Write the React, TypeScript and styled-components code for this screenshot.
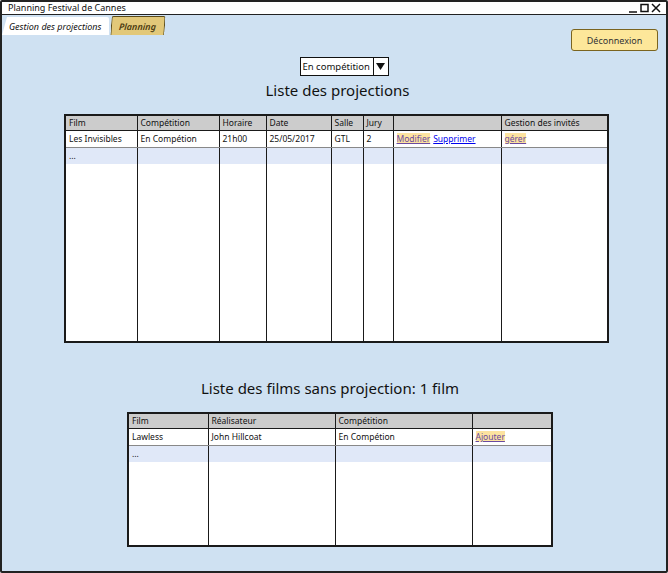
import React from "react";
import styled, { createGlobalStyle } from "styled-components";

const Global = createGlobalStyle`
  html, body { margin: 0; padding: 0; background: #ffffff; }
  body { font-family: "Noto Sans", "Open Sans", sans-serif; }
  #root { width: 668px; height: 573px; }
`;

const Window = styled.div`
  box-sizing: border-box;
  width: 668px;
  height: 573px;
  border: 2px solid #222;
  border-radius: 2px;
  background: #cfe1f2;
  display: flex;
  flex-direction: column;
  overflow: hidden;
  position: relative;
`;

const TitleBar = styled.div`
  height: 12px;
  background: #fff;
  border-bottom: 1px solid #222;
  display: flex;
  align-items: center;
  justify-content: space-between;
  padding: 0 4px 0 6px;
  font-size: 9px;
  color: #111;
  line-height: 12px;
`;

const Controls = styled.div`
  display: flex;
  align-items: center;
  gap: 2px;
`;

const TabRow = styled.div`
  height: 20px;
  display: flex;
  align-items: flex-end;
  gap: 2px;
`;

const Tab = styled.div<{ $active?: boolean }>`
  height: 18px;
  display: flex;
  align-items: center;
  padding: 0 8px 0 7px;
  font-size: 9px;
  font-style: italic;
  color: ${(p) => (p.$active ? "#111" : "#4a3a10")};
  background: ${(p) => (p.$active ? "#fff" : "#e2c879")};
  border: ${(p) => (p.$active ? "none" : "1.5px solid #5a4a1a")};
  border-bottom: none;
  clip-path: ${(p) => (p.$active ? "polygon(5px 0, 100% 0, 100% 100%, 0 100%)" : "none")};
  border-radius: 2px 2px 0 0;
  transform: ${(p) => (p.$active ? "none" : "skewX(-4deg)")};
  font-weight: ${(p) => (p.$active ? 400 : 600)};
`;

const Content = styled.div`
  flex: 1;
  display: flex;
  flex-direction: column;
  align-items: center;
  padding-top: 22px;
`;

const LogoutButton = styled.div`
  position: absolute;
  top: 27px;
  right: 8px;
  box-sizing: border-box;
  width: 87px;
  height: 22px;
  background: #fde79a;
  border: 1.5px solid #7a6420;
  border-radius: 3px;
  font-size: 9px;
  color: #333;
  display: flex;
  align-items: center;
  justify-content: center;
`;

const Select = styled.div`
  display: flex;
  height: 19px;
  width: 89px;
  box-sizing: border-box;
  border: 1px solid #111;
  background: #fff;
  margin-left: 20px;
`;

const SelectText = styled.div`
  flex: 1;
  font-size: 9.5px;
  padding-left: 2px;
  line-height: 17px;
  color: #111;
  border-right: 1px solid #111;
  white-space: nowrap;
  overflow: hidden;
`;

const SelectArrow = styled.div`
  width: 14px;
  display: flex;
  align-items: center;
  justify-content: center;
`;

const Heading = styled.div<{ $mt: number; $ml: number }>`
  margin-top: ${(p) => p.$mt}px;
  margin-left: ${(p) => p.$ml}px;
  font-size: 15px;
  color: #111;
  line-height: 20px;
`;

const Table = styled.table<{ $w: number; $h: number; $mt: number; $ml: number }>`
  margin-top: ${(p) => p.$mt}px;
  margin-left: ${(p) => p.$ml}px;
  width: ${(p) => p.$w}px;
  height: ${(p) => p.$h}px;
  border-collapse: collapse;
  table-layout: fixed;
  border: 2px solid #1a1a1a;
  background: #fff;
  font-size: 8.5px;
  color: #111;
`;

const Th = styled.th`
  background: #cccccc;
  font-weight: 400;
  text-align: left;
  height: 14px;
  padding: 0 3px;
  border-left: 1.5px solid #1a1a1a;
  border-bottom: 1.5px solid #1a1a1a;
  line-height: 14px;
  white-space: nowrap;
  overflow: hidden;
`;

const Td = styled.td<{ $alt?: boolean }>`
  height: 16px;
  padding: 0 3px;
  border-left: 1.5px solid #1a1a1a;
  background: ${(p) => (p.$alt ? "#e0e8f8" : "#fff")};
  border-bottom: ${(p) => (p.$alt ? "none" : "1px solid #888")};
  line-height: 16px;
  white-space: nowrap;
  overflow: hidden;
  vertical-align: middle;
  color: #111;
`;

const FillTd = styled.td`
  border-left: 1.5px solid #1a1a1a;
  background: #fff;
`;

const Link = styled.span<{ $hl?: boolean }>`
  color: ${(p) => (p.$hl ? "#6a4aa0" : "#0000ee")};
  background: ${(p) => (p.$hl ? "#fde3a0" : "transparent")};
  text-decoration: underline;
  margin-right: 3px;
`;

type Cell = React.ReactNode;

function Grid({
  widths,
  headers,
  row,
  w,
  h,
  mt,
  ml,
}: {
  widths: number[];
  headers: string[];
  row: Cell[];
  w: number;
  h: number;
  mt: number;
  ml: number;
}) {
  return (
    <Table $w={w} $h={h} $mt={mt} $ml={ml}>
      <colgroup>
        {widths.map((cw, i) => (
          <col key={i} style={{ width: cw }} />
        ))}
      </colgroup>
      <thead>
        <tr>
          {headers.map((t, i) => (
            <Th key={i}>{t}</Th>
          ))}
        </tr>
      </thead>
      <tbody>
        <tr>
          {row.map((c, i) => (
            <Td key={i}>{c}</Td>
          ))}
        </tr>
        <tr>
          {row.map((_, i) => (
            <Td key={i} $alt>
              {i === 0 ? "..." : ""}
            </Td>
          ))}
        </tr>
        <tr>
          {row.map((_, i) => (
            <FillTd key={i} />
          ))}
        </tr>
      </tbody>
    </Table>
  );
}

export default function App() {
  return (
    <>
      <Global />
      <Window>
        <TitleBar>
          <span>Planning Festival de Cannes</span>
          <Controls>
            <svg width="34" height="10" viewBox="0 0 34 10">
              <line x1="1" y1="9" x2="9" y2="9" stroke="#111" strokeWidth="1.5" />
              <rect x="13" y="1.5" width="7" height="7" fill="none" stroke="#111" strokeWidth="1.5" />
              <path d="M24 1 L32 9 M32 1 L24 9" stroke="#111" strokeWidth="1.5" />
            </svg>
          </Controls>
        </TitleBar>
        <TabRow>
          <Tab $active>Gestion des projections</Tab>
          <Tab>Planning</Tab>
        </TabRow>
        <LogoutButton>Déconnexion</LogoutButton>
        <Content>
          <Select>
            <SelectText>En compétition</SelectText>
            <SelectArrow>
              <svg width="9" height="8" viewBox="0 0 9 8">
                <path d="M0 0 L9 0 L4.5 7 Z" fill="#111" />
              </svg>
            </SelectArrow>
          </Select>
          <Heading $mt={4} $ml={7}>Liste des projections</Heading>
          <Grid
            mt={14}
            ml={5}
            w={543}
            h={229}
            widths={[72, 82, 47, 65, 32, 30, 108, 107]}
            headers={["Film", "Compétition", "Horaire", "Date", "Salle", "Jury", "", "Gestion des invités"]}
            row={[
              "Les Invisibles",
              "En Compétion",
              "21h00",
              "25/05/2017",
              "GTL",
              "2",
              <>
                <Link $hl>Modifier</Link>
                <Link>Supprimer</Link>
              </>,
              <Link $hl>gérer</Link>,
            ]}
          />
          <Heading $mt={35} $ml={-8}>Liste des films sans projection: 1 film</Heading>
          <Grid
            mt={14}
            ml={12}
            w={424}
            h={135}
            widths={[80, 127, 137, 80]}
            headers={["Film", "Réalisateur", "Compétition", ""]}
            row={["Lawless", "John Hillcoat", "En Compétion", <Link $hl>Ajouter</Link>]}
          />
        </Content>
      </Window>
    </>
  );
}
